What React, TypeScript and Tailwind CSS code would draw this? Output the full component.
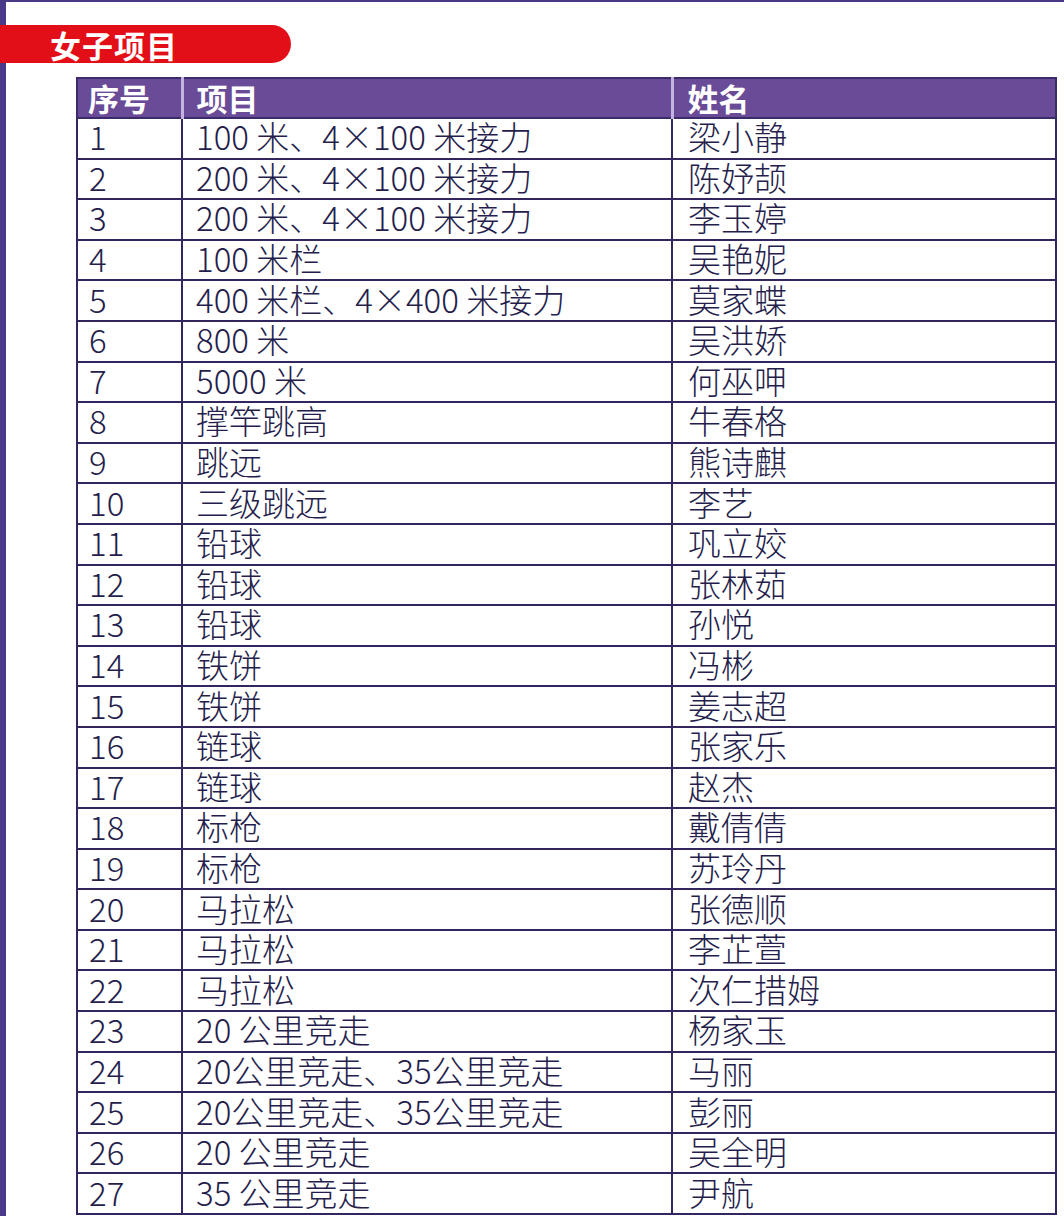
const rows: [string, string][] = [
  ['100 米、4×100 米接力', '梁小静'],
  ['200 米、4×100 米接力', '陈妤颉'],
  ['200 米、4×100 米接力', '李玉婷'],
  ['100 米栏', '吴艳妮'],
  ['400 米栏、4×400 米接力', '莫家蝶'],
  ['800 米', '吴洪娇'],
  ['5000 米', '何巫呷'],
  ['撑竿跳高', '牛春格'],
  ['跳远', '熊诗麒'],
  ['三级跳远', '李艺'],
  ['铅球', '巩立姣'],
  ['铅球', '张林茹'],
  ['铅球', '孙悦'],
  ['铁饼', '冯彬'],
  ['铁饼', '姜志超'],
  ['链球', '张家乐'],
  ['链球', '赵杰'],
  ['标枪', '戴倩倩'],
  ['标枪', '苏玲丹'],
  ['马拉松', '张德顺'],
  ['马拉松', '李芷萱'],
  ['马拉松', '次仁措姆'],
  ['20 公里竞走', '杨家玉'],
  ['20公里竞走、35公里竞走', '马丽'],
  ['20公里竞走、35公里竞走', '彭丽'],
  ['20 公里竞走', '吴全明'],
  ['35 公里竞走', '尹航'],
]

const font = { fontFamily: '"Noto Sans CJK SC", "Noto Sans", sans-serif' }

const App = () => {
  return (
    <div className="w-[1064px] h-[1216px] bg-white flex flex-col border-t-2 border-[#4a3a86] overflow-hidden" style={font}>
      <div className="flex flex-1">
        <div className="w-[6px] bg-[#4b3a8a] shrink-0" />
        <div className="flex-1 flex flex-col">
          <div className="mt-[23px] -ml-[6px] w-[291px] h-[38px] bg-[#e30f18] rounded-r-full flex items-center pl-[50px]">
            <span className="text-white text-[31px] font-bold leading-none tracking-[1px]">女子项目</span>
          </div>

          <div className="mt-[14px] ml-[70px] w-[981px]">
            <table className="w-full border-collapse table-fixed text-[#251e4c]">
              <colgroup>
                <col className="w-[105px]" />
                <col className="w-[490px]" />
                <col />
              </colgroup>
              <thead>
                <tr className="h-[40px] bg-[#6a4b98] text-white">
                  <th className="border-2 border-[#3a2b6b] border-r-[3px] border-r-[#c2b3df] text-left pl-[10px] pb-[2px] text-[31px] font-bold leading-none">序号</th>
                  <th className="border-2 border-[#3a2b6b] border-r-[3px] border-r-[#c2b3df] text-left pl-[13px] pb-[2px] text-[31px] font-bold leading-none">项目</th>
                  <th className="border-2 border-[#3a2b6b] text-left pl-[14px] pb-[2px] text-[31px] font-bold leading-none">姓名</th>
                </tr>
              </thead>
              <tbody>
                {rows.map(([event, name], i) => (
                  <tr key={i} className="h-[40.6px]">
                    <td className="border-2 border-[#33265f] pl-[11px] pb-[3px] text-[33px] font-light leading-none">{i + 1}</td>
                    <td className="border-2 border-[#33265f] pl-[13px] pb-[3px] text-[33px] font-light leading-none whitespace-nowrap">{event}</td>
                    <td className="border-2 border-[#33265f] pl-[15px] pb-[3px] text-[33px] font-light leading-none">{name}</td>
                  </tr>
                ))}
              </tbody>
            </table>
          </div>
        </div>
      </div>
    </div>
  )
}

export default App
